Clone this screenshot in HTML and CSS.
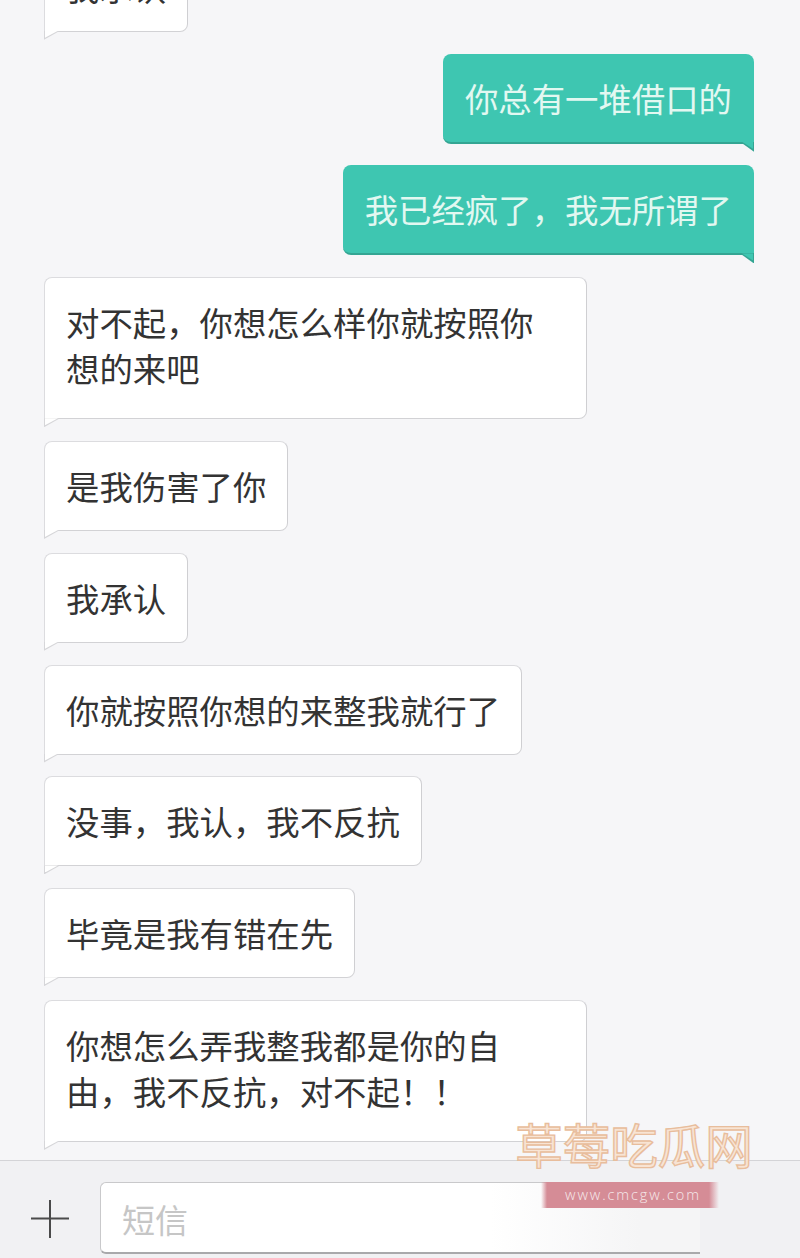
FILE: index.html
```html
<!DOCTYPE html>
<html lang="zh-CN">

<head>
    <meta charset="UTF-8">
    <meta name="viewport" content="width=device-width, initial-scale=1.0">
    <title>短信</title>
    <link rel="stylesheet" href="styles.css">
</head>

<body>
    <div class="messages">
        <div class="bubble in">我承认</div>
        <div class="bubble out">你总有一堆借口的</div>
        <div class="bubble out">我已经疯了，我无所谓了</div>
        <div class="bubble in two-line">对不起，你想怎么样你就按照你想的来吧</div>
        <div class="bubble in">是我伤害了你</div>
        <div class="bubble in">我承认</div>
        <div class="bubble in">你就按照你想的来整我就行了</div>
        <div class="bubble in">没事，我认，我不反抗</div>
        <div class="bubble in">毕竟是我有错在先</div>
        <div class="bubble in two-line">你想怎么弄我整我都是你的自由，我不反抗，对不起！！</div>
    </div>

    <div class="composer">
        <svg class="plus" width="40" height="40" viewBox="0 0 40 40">
            <path d="M1 19.5H39M20 1V39" fill="none" stroke="#4a4a4a" stroke-width="2" />
        </svg>
        <div class="field">短信</div>
    </div>

    <div class="watermark">
        <div class="wm-name">草莓吃瓜网</div>
        <div class="wm-url">www.cmcgw.com</div>
    </div>
</body>

</html>
```

FILE: styles.css
```css
* {
    margin: 0;
    padding: 0;
    box-sizing: border-box;
}

body {
    position: relative;
    height: 1258px;
    overflow: hidden;
    display: flex;
    flex-direction: column;
    background-color: #f6f6f8;
    font-family: "Noto Sans CJK SC", "Liberation Sans", sans-serif;
}

.messages {
    height: 1160px;
    flex-shrink: 0;
    overflow: hidden;
    display: flex;
    flex-direction: column;
    justify-content: flex-end;
    align-items: flex-start;
    gap: 21.8px;
    padding: 0 46px 18px 44px;
}

.bubble {
    position: relative;
    flex-shrink: 0;
    max-width: 543px;
    height: 90px;
    padding: 21px 22px;
    font-size: 33.4px;
    line-height: 46px;
    border-radius: 8px;
}

.bubble.two-line {
    height: 142px;
}

.bubble::before,
.bubble::after {
    content: "";
    position: absolute;
    top: 100%;
}

.in {
    color: #333;
    background-color: #fff;
    border: 1px solid #dcdcdf;
    border-right-color: #cfcfd2;
    border-bottom-color: #d2d2d5;
    border-bottom-left-radius: 0;
    padding-left: 21px;
    padding-right: 21px;
}

.in::before {
    left: -1px;
    width: 16px;
    height: 9px;
    background-color: #d6d6d9;
    clip-path: polygon(0 0, 100% 0, 0 100%);
}

.in::after {
    left: 0;
    width: 13px;
    height: 7px;
    background-color: #fff;
    clip-path: polygon(0 0, 100% 0, 0 100%);
}

.out {
    align-self: flex-end;
    color: #e2f8f1;
    background-color: #3ec6b1;
    border-bottom: 2px solid #34a593;
    border-bottom-right-radius: 0;
}

.out::before {
    right: 0;
    width: 14px;
    height: 10px;
    background-color: #34a593;
    clip-path: polygon(0 0, 100% 0, 100% 100%);
}

.out::after {
    right: 1px;
    width: 11px;
    height: 7px;
    background-color: #3ec6b1;
    clip-path: polygon(0 0, 100% 0, 100% 100%);
}

.composer {
    flex: 1;
    display: flex;
    align-items: flex-start;
    gap: 30px;
    padding: 21px 0 0 30px;
    background-color: #f1f1f3;
    border-top: 1px solid #d4d4d7;
}

.plus {
    flex-shrink: 0;
    margin-top: 17px;
}

.field {
    width: 600px;
    height: 72px;
    padding-left: 21px;
    font-size: 33px;
    line-height: 72px;
    color: #c6c6c6;
    background: linear-gradient(to right, #fff 65%, #f5f5f6 90%);
    border: 1px solid #c9c9cb;
    border-right: 0;
    border-bottom: 2px solid #a9a9ab;
    border-radius: 6px 0 0 6px;
}

.watermark {
    position: absolute;
    left: 514px;
    top: 1117px;
    width: 240px;
    display: flex;
    flex-direction: column;
    align-items: center;
}

.wm-name {
    font-size: 47.5px;
    line-height: 54px;
    color: #f8e4d4;
    -webkit-text-stroke: 1.4px #e8bd9c;
    white-space: nowrap;
}

.wm-url {
    width: 178px;
    height: 26px;
    margin-top: 11px;
    margin-left: -8px;
    padding-left: 6px;
    font-family: "Open Sans", "Liberation Sans", sans-serif;
    font-size: 14.5px;
    font-weight: 300;
    line-height: 25px;
    letter-spacing: 1.9px;
    text-align: center;
    white-space: nowrap;
    color: #f6e9ea;
    background: linear-gradient(to right, transparent, #d58c96 6px, #d58c96 calc(100% - 10px), transparent);
}
```
